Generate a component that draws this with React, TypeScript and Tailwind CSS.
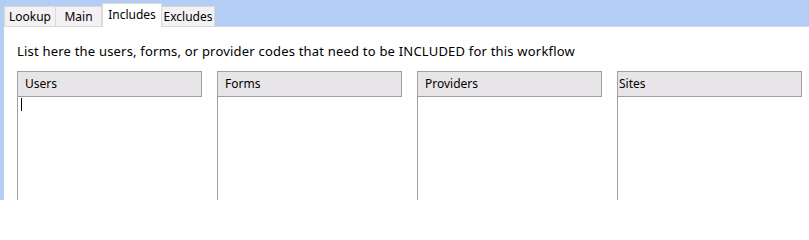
const tabs = [
  { label: 'Lookup', w: 'w-[52px]' },
  { label: 'Main', w: 'w-[46px]' },
  { label: 'Includes', w: 'w-[60px]' },
  { label: 'Excludes', w: 'w-[53px]' },
];
const lists = ['Users', 'Forms', 'Providers', 'Sites'];

function ListPanel({ title, active }: { title: string; active?: boolean }) {
  return (
    <div className="flex w-[185px] flex-col">
      <div
        className={`h-[26px] border border-[#a0a0a0] bg-[#e8e5e8] text-[12px] leading-[24px] text-black ${
          title === 'Sites' ? 'pl-[1px]' : 'pl-[7px]'
        }`}
      >
        {title}
      </div>
      <div className="h-[110px] border-l border-[#a0a0a0] bg-white pl-[3px] pt-[1px]">
        {active && <div className="h-[13px] w-px bg-black" />}
      </div>
    </div>
  );
}

export default function App() {
  return (
    <div
      className="h-[200px] w-[809px] overflow-hidden bg-[#b4cdf5] pl-[4px]"
      style={{ fontFamily: '"Segoe UI", "Noto Sans", "Open Sans", sans-serif' }}
    >
      {/* Tab strip */}
      <div className="flex h-[26px] items-end">
        {tabs.map((t) =>
          t.label === 'Includes' ? (
            <div
              key={t.label}
              className={`${t.w} relative z-10 -mb-px flex h-[24px] items-start justify-center border border-b-0 border-[#d9d9d9] bg-white pt-[2px] text-[12px] text-black`}
            >
              {t.label}
            </div>
          ) : (
            <div
              key={t.label}
              className={`${t.w} flex h-[20px] items-center justify-center border border-b-0 border-l-0 border-[#d9d9d9] bg-[#f3f1f4] text-[12px] text-black first:border-l`}
            >
              {t.label}
            </div>
          )
        )}
      </div>

      {/* Page */}
      <div className="h-[174px] border-t border-[#d9d9d9] bg-white pl-[13px] pt-[16px]">
        <p className="text-[13px] leading-[16px] tracking-[0.2px] text-black">
          List here the users, forms, or provider codes that need to be INCLUDED for this workflow
        </p>
        <div className="mt-[12px] flex gap-[15px]">
          {lists.map((l) => (
            <ListPanel key={l} title={l} active={l === 'Users'} />
          ))}
        </div>
      </div>
    </div>
  );
}
